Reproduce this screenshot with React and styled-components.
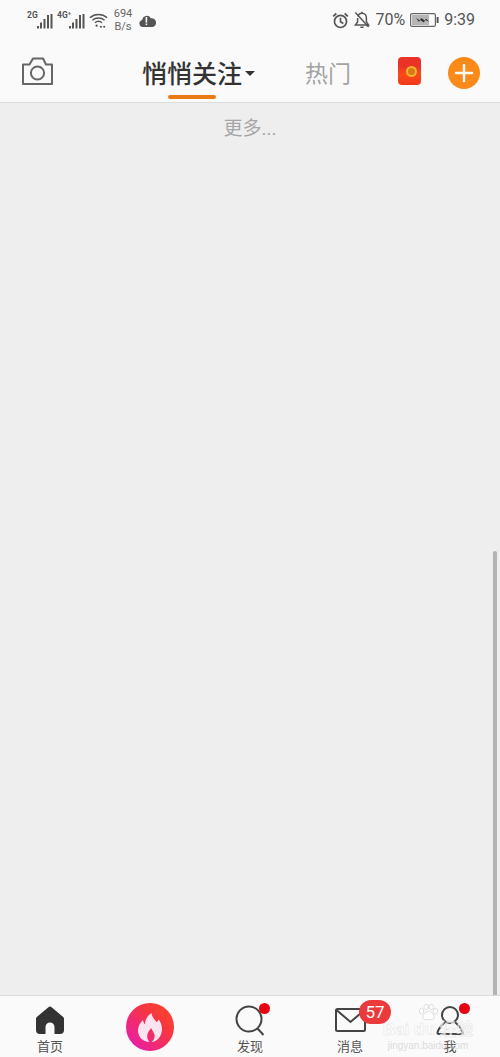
import React from 'react'
import styled, { createGlobalStyle } from 'styled-components'

const Global = createGlobalStyle`
  html, body { margin: 0; padding: 0; background: #eee; }
  * { box-sizing: border-box; }
  body { font-family: "Roboto", "Noto Sans CJK SC", sans-serif; }
`

const Page = styled.div`
  width: 500px;
  height: 1057px;
  display: flex;
  flex-direction: column;
  overflow: hidden;
  position: relative;
`

const StatusBar = styled.div`
  height: 42px;
  background: #fafafa;
  display: flex;
  justify-content: space-between;
  align-items: center;
  padding: 0 25px 2px 27px;
  color: #555;
`

const StatusGroup = styled.div`
  display: flex;
  align-items: center;
  gap: ${p => p.$gap || 4}px;
`

const Speed = styled.div`
  font-size: 11px;
  line-height: 13px;
  width: 20px;
  text-align: center;
  color: #666;
  margin: 0 2px 0 1px;
`

const StatusText = styled.span`
  font-size: ${p => p.$size || 16}px;
  line-height: 20px;
  color: #555;
`

const NavBar = styled.div`
  height: 61px;
  background: #fafafa;
  border-bottom: 1px solid #dcdcdc;
  display: flex;
  align-items: center;
  padding: 2px 20px 0 21px;
  position: relative;
`

const CameraSlot = styled.div`
  display: flex;
  margin-bottom: 4px;
`

const Tabs = styled.div`
  display: flex;
  align-items: center;
  margin: 3px 0 0 88px;
  flex: 1;
`

const Tab = styled.div`
  position: relative;
  font-size: ${p => (p.$active ? 25 : 23)}px;
  line-height: 34px;
  color: ${p => (p.$active ? '#333' : '#a3a3a3')};
  font-weight: ${p => (p.$active ? 500 : 400)};
  white-space: nowrap;
  display: flex;
  align-items: center;
`

const Caret = styled.span`
  width: 0;
  height: 0;
  border-left: 5px solid transparent;
  border-right: 5px solid transparent;
  border-top: 5px solid #333;
  margin: 0 0 3px 3px;
`

const Underline = styled.div`
  position: absolute;
  left: 26px;
  bottom: -7px;
  width: 48px;
  height: 4px;
  border-radius: 2px;
  background: #e97a14;
`

const HotTab = styled(Tab)`
  margin-left: 50px;
`

const RedPacket = styled.div`
  width: 23px;
  height: 28px;
  border-radius: 4px;
  background: linear-gradient(#ea3326 0 32%, #fc4a1a 62%, #ee3a1c);
  position: relative;
  margin: 0 27px 4px 0;
  &::after {
    content: '';
    position: absolute;
    left: 8px;
    top: 9px;
    width: 7px;
    height: 7px;
    border-radius: 50%;
    background: #d9791a;
    border: 2px solid #f7b52c;
  }
`

const AddButton = styled.div`
  width: 32px;
  height: 32px;
  border-radius: 50%;
  background: #fb8a1a;
  display: flex;
  align-items: center;
  justify-content: center;
`

const Content = styled.div`
  flex: 1;
  background: #eeeeee;
  position: relative;
  display: flex;
  justify-content: center;
`

const More = styled.div`
  font-size: 19px;
  line-height: 24px;
  color: #a6a6a6;
  margin-top: 14px;
`

const ScrollThumb = styled.div`
  position: absolute;
  right: 3px;
  top: 448px;
  bottom: 0;
  width: 4px;
  background: #b4b4b4;
  border-radius: 2px 2px 0 0;
`

const TabBar = styled.div`
  height: 62px;
  background: #fafafa;
  border-top: 1px solid #dcdcdc;
  display: grid;
  grid-template-columns: repeat(5, 100px);
  position: relative;
`

const TabItem = styled.div`
  position: relative;
  display: flex;
  flex-direction: column;
  align-items: center;
  padding-top: 8px;
`

const TabIcon = styled.div`
  height: 32px;
  display: flex;
  align-items: center;
  justify-content: center;
  position: relative;
`

const TabLabel = styled.div`
  font-size: 13px;
  line-height: 16px;
  color: #555;
  margin-top: 3px;
`

const FlameCircle = styled.div`
  width: 48px;
  height: 48px;
  border-radius: 50%;
  margin-top: -1px;
  background: linear-gradient(45deg, #e81ea8 10%, #f7363f 65%, #fb4a26);
  display: flex;
  align-items: center;
  justify-content: center;
`

const Dot = styled.span`
  position: absolute;
  width: 11px;
  height: 11px;
  border-radius: 50%;
  background: #e60012;
  top: ${p => p.$top}px;
  left: ${p => p.$left}px;
`

const Badge = styled.span`
  position: absolute;
  top: 4px;
  left: 59px;
  width: 32px;
  height: 24px;
  border-radius: 12px;
  background: #ea3a3c;
  color: #fff;
  font-size: 17px;
  line-height: 24px;
  text-align: center;
`

const Watermark = styled.div`
  position: absolute;
  left: 383px;
  top: 7px;
  width: 90px;
  display: flex;
  flex-direction: column;
  align-items: center;
  pointer-events: none;
`

const WatermarkLogo = styled.div`
  font-family: "Liberation Sans", "Noto Sans CJK SC", sans-serif;
  font-size: 17px;
  font-weight: 700;
  line-height: 18px;
  white-space: nowrap;
  color: rgba(255, 255, 255, 0.7);
  -webkit-text-stroke: 0.5px rgba(190, 190, 190, 0.45);
`

const WatermarkUrl = styled.div`
  font-family: "Liberation Sans", sans-serif;
  font-size: 10px;
  line-height: 14px;
  white-space: nowrap;
  color: rgba(190, 190, 190, 0.55);
`

const Signal = ({ label, width }) => (
  <svg width={width} height="18" viewBox={`0 0 ${width} 18`}>
    <text x="0" y="7" fontSize="8.5" fontWeight="700" fill="#555" fontFamily="Roboto">{label}</text>
    <g transform={`translate(${width - 27} 0)`}>
      <rect x="11" y="15" width="2" height="2.5" fill="#555" />
      <rect x="14" y="11.5" width="2" height="6" fill="#555" />
      <rect x="17.5" y="8" width="2" height="9.5" fill="#555" />
      <rect x="21" y="4" width="2" height="13.5" fill="#555" />
      <rect x="24.5" y="3" width="2" height="14.5" fill="#555" />
    </g>
  </svg>
)

const Wifi = () => (
  <svg width="19" height="17" viewBox="0 0 20 17" fill="none" stroke="#555" strokeWidth="1.5">
    <path d="M1 5.5C6 1 14 1 19 5.5" />
    <path d="M3.6 8.2C7.2 5 12.8 5 16.4 8.2" />
    <path d="M6.2 10.8C8.4 9 11.6 9 13.8 10.8" />
    <circle cx="8" cy="14" r="1.2" fill="#555" stroke="none" />
    <circle cx="12.5" cy="15" r="1.1" fill="#555" stroke="none" />
    <circle cx="16" cy="15" r="1.1" fill="#555" stroke="none" />
  </svg>
)

const Cloud = () => (
  <svg width="17" height="13" viewBox="0 0 17 13">
    <path d="M4 13A3.6 3.6 0 0 1 3.2 5.9 4.6 4.6 0 0 1 11.8 4.3 4.4 4.4 0 1 1 13 13Z" fill="#555" />
    <rect x="6.6" y="3" width="1.6" height="5.6" fill="#fafafa" />
    <rect x="6.6" y="9.5" width="1.6" height="1.6" fill="#fafafa" />
  </svg>
)

const Alarm = () => (
  <svg width="17" height="17" viewBox="0 0 18 18" fill="none" stroke="#555" strokeWidth="1.8">
    <circle cx="9" cy="10" r="6.4" />
    <path d="M9 6v4.4l3 1.8" />
    <path d="M1.2 4.6 4.6 1.6M16.8 4.6 13.4 1.6" />
  </svg>
)

const BellOff = () => (
  <svg width="16" height="18" viewBox="0 0 16 18" fill="none" stroke="#555" strokeWidth="1.5">
    <path d="M4 5.5C4.4 3.4 6 2.2 8 2.2c2.6 0 4.4 2 4.4 4.6v4L14.6 14H1.4l2.2-3V7" />
    <path d="M6.4 16.3h3.2M8 .8v1.4" />
    <path d="M1.4 1.6 14.6 16" />
  </svg>
)

const Battery = () => (
  <svg width="29" height="14" viewBox="0 0 29 14">
    <rect x=".6" y=".6" width="24.8" height="12.8" rx="1.5" fill="#fafafa" stroke="#666" strokeWidth="1.2" />
    <rect x="2" y="2" width="17" height="10" fill="#b5b5b5" />
    <rect x="26.6" y="4" width="2" height="6" fill="#555" />
    <path d="M6 5l4 2.5 1-2.5 4 2.5 1-2 3 3-4-1.5-1 2.5-4-2.5-1 2Z" fill="#333" />
  </svg>
)

const Camera = () => (
  <svg width="33" height="30" viewBox="0 0 33 30" fill="none" stroke="#666" strokeWidth="2">
    <path d="M2 8.5h6.500L12 2.500h10l3 6h6v19.400H2Z" strokeLinejoin="round" />
    <circle cx="16.5" cy="17" r="6.6" />
  </svg>
)

const Plus = () => (
  <svg width="20" height="20" viewBox="0 0 20 20" stroke="#fff" strokeWidth="2.4" strokeLinecap="round">
    <path d="M10 2v16M2 10h16" />
  </svg>
)

const Home = () => (
  <svg width="30" height="30" viewBox="0 0 30 30">
    <path fill="#333" d="M13.4 2.200a2.400 2.400 0 0 1 3.200 0L28.200 12c.5.500.8 1.100.8 1.900V25a4 4 0 0 1-4 4h-5.500v-7a4.500 4.500 0 0 0-9 0v7H5a4 4 0 0 1-4-4V13.900c0-.8.300-1.400.8-1.900Z" />
  </svg>
)

const Flame = () => (
  <svg width="24" height="29" viewBox="0 0 24 29">
    <path fill="#fbe4f0" d="M13.500 0c.6 4 2.500 5.800 5 9 1.300-.6 1.800-1.500 2-2.800C22.800 9 24 12.500 24 16c0 7-5 13-10.500 13 2.500-2 3.500-4.500 3-7.200-.4-2.300-2.300-4-3.300-6.800-1.800 2-3.900 4.800-4 8-.1 2.500.8 4.500 2.300 6C5 29 0 24 0 17.500 0 13 2.500 9.500 5 7c.2 2 .8 3.300 2 4.200C7 7 9.500 2.500 13.500 0Z" />
  </svg>
)

const Search = () => (
  <svg width="32" height="32" viewBox="0 0 32 32" fill="none" stroke="#444" strokeWidth="2">
    <circle cx="15" cy="15" r="12.5" />
    <path d="M23.5 24.5 29.5 31" />
  </svg>
)

const Mail = () => (
  <svg width="31" height="26" viewBox="0 0 31 26" fill="none" stroke="#444" strokeWidth="2">
    <rect x="1" y="2" width="29" height="22" rx="1.5" />
    <path d="M1.5 3 15.5 15 29.5 3" />
  </svg>
)

const User = () => (
  <svg width="28" height="30" viewBox="0 0 28 30" fill="none" stroke="#444" strokeWidth="2">
    <circle cx="14" cy="10" r="8" />
    <path d="M9 17C6 20 2.500 23 1.500 27.500c-.2 1 .3 1.500 1.300 1.500h22.400c1 0 1.500-.5 1.300-1.500C25.500 23 22 20 19 17" />
  </svg>
)

const Paw = () => (
  <svg width="22" height="18" viewBox="0 0 24 18" fill="rgba(255,255,255,.7)" stroke="rgba(190,190,190,.5)">
    <ellipse cx="5" cy="8" rx="2.5" ry="3.2" />
    <ellipse cx="10" cy="3.5" rx="2.5" ry="3" />
    <ellipse cx="15.5" cy="3.5" rx="2.5" ry="3" />
    <ellipse cx="20" cy="8" rx="2.5" ry="3.2" />
    <path d="M12.500 8c3 0 6 4 6 7 0 2-2 2.500-3 2.500s-2-.5-3-.5-2 .5-3 .5-3-.5-3-2.500c0-3 3-7 6-7Z" />
  </svg>
)

export default function App () {
  return (
    <Page>
      <Global />
      <StatusBar>
        <StatusGroup $gap={4}>
          <Signal label="2G" width={26} />
          <Signal label="4G⁺" width={28} />
          <Wifi />
          <Speed>694<br />B/s</Speed>
          <Cloud />
        </StatusGroup>
        <StatusGroup $gap={5}>
          <Alarm />
          <BellOff />
          <StatusText>70%</StatusText>
          <Battery />
          <StatusText $size={16}>9:39</StatusText>
        </StatusGroup>
      </StatusBar>
      <NavBar>
        <CameraSlot><Camera /></CameraSlot>
        <Tabs>
          <Tab $active>
            悄悄关注
            <Caret />
            <Underline />
          </Tab>
          <HotTab>热门</HotTab>
        </Tabs>
        <RedPacket />
        <AddButton><Plus /></AddButton>
      </NavBar>
      <Content>
        <More>更多...</More>
        <ScrollThumb />
      </Content>
      <TabBar>
        <TabItem>
          <TabIcon><Home /></TabIcon>
          <TabLabel>首页</TabLabel>
        </TabItem>
        <TabItem>
          <FlameCircle><Flame /></FlameCircle>
        </TabItem>
        <TabItem>
          <TabIcon><Search /></TabIcon>
          <TabLabel>发现</TabLabel>
          <Dot $top={7} $left={59} />
        </TabItem>
        <TabItem>
          <TabIcon><Mail /></TabIcon>
          <TabLabel>消息</TabLabel>
          <Badge>57</Badge>
        </TabItem>
        <TabItem>
          <TabIcon><User /></TabIcon>
          <TabLabel>我</TabLabel>
          <Dot $top={7} $left={59} />
        </TabItem>
        <Watermark>
          <Paw />
          <WatermarkLogo>Bai du 经验</WatermarkLogo>
          <WatermarkUrl>jingyan.baidu.com</WatermarkUrl>
        </Watermark>
      </TabBar>
    </Page>
  )
}
